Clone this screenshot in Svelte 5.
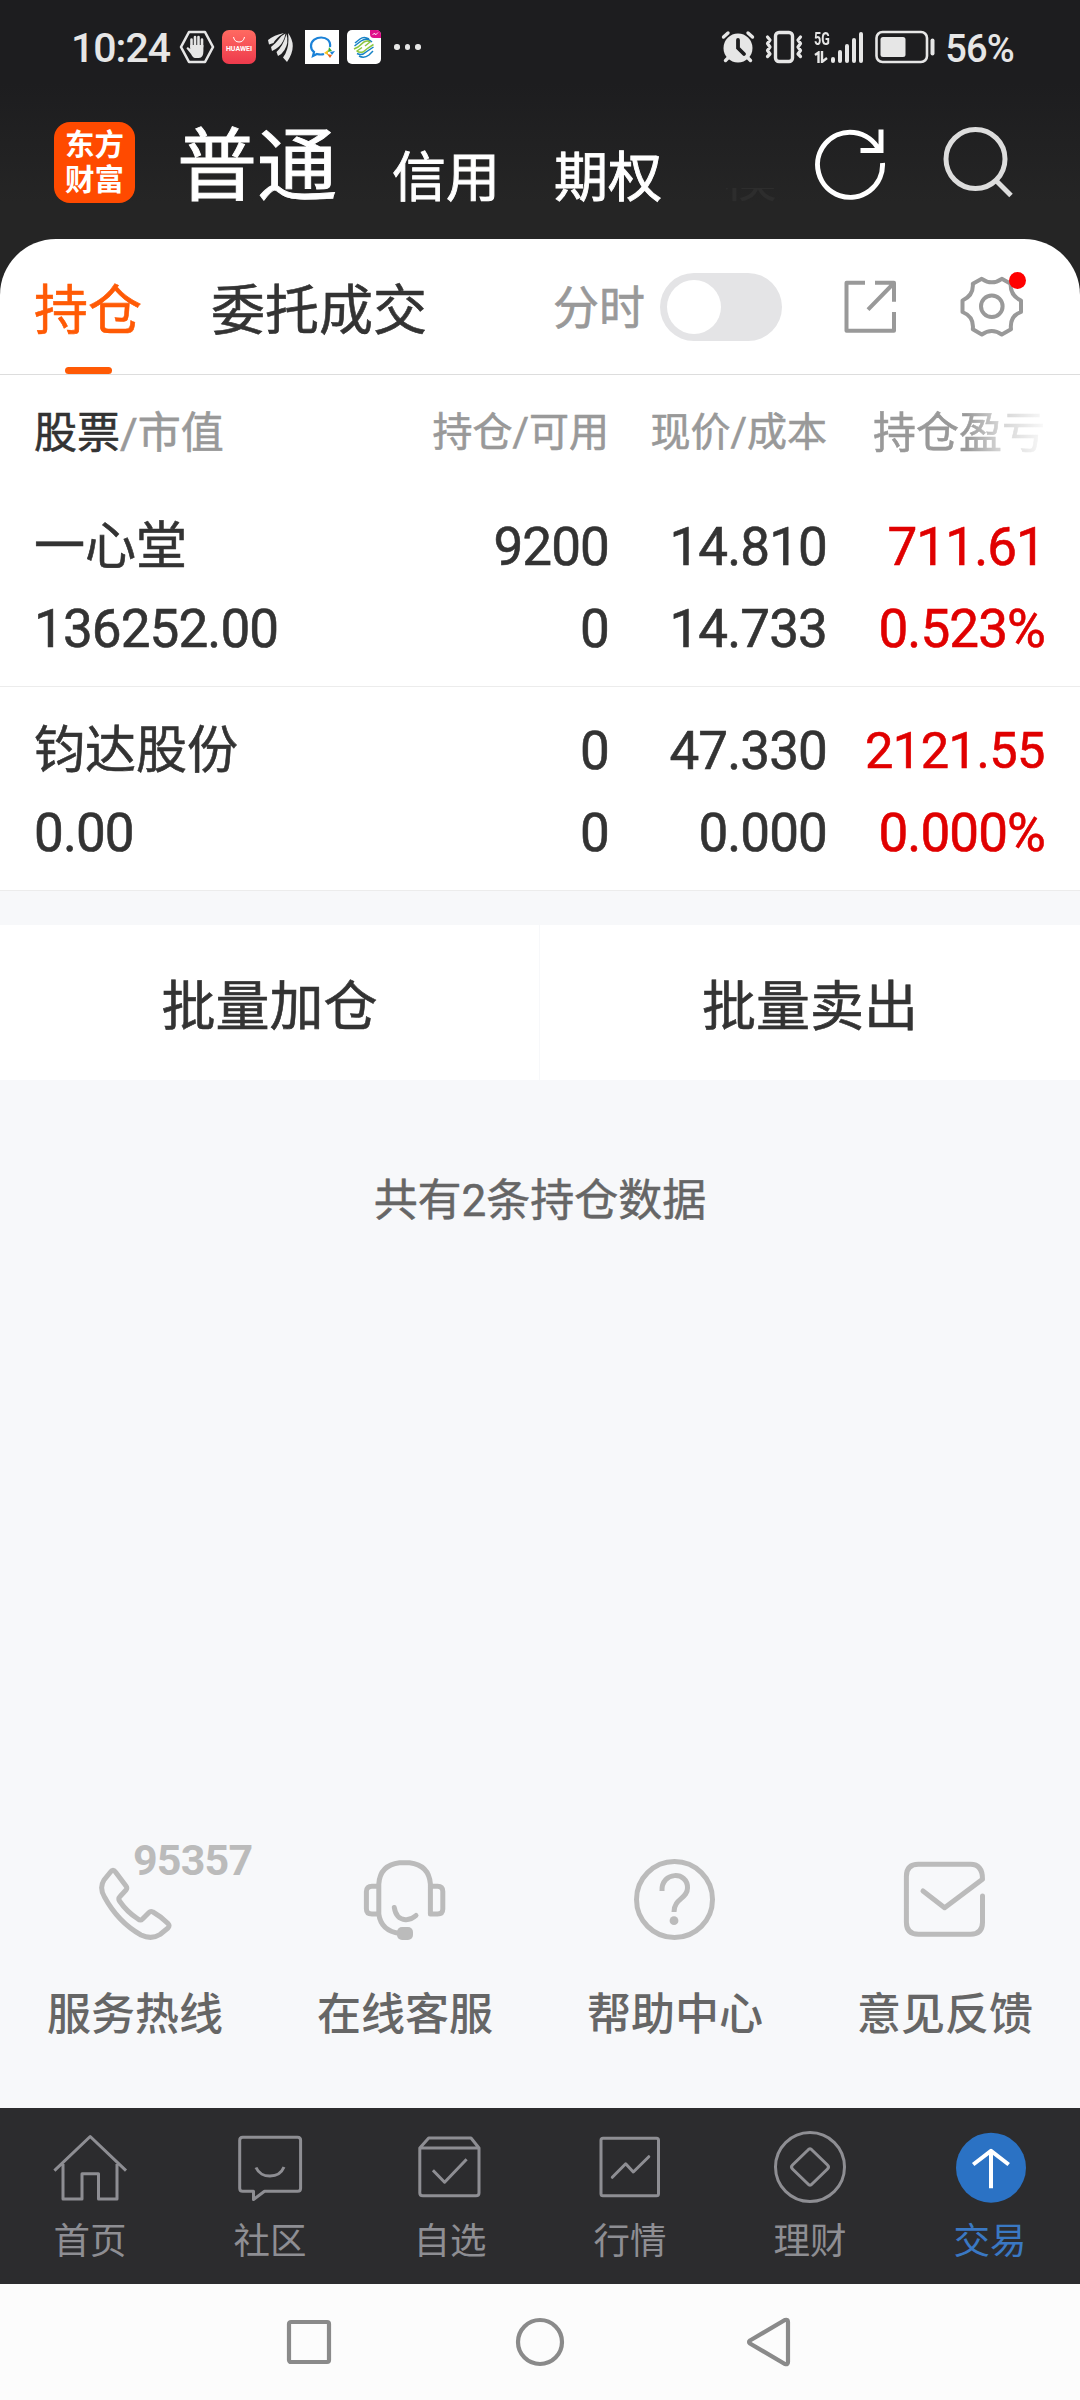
<script lang="ts">
	let intraday = false;
	let activeTab = 'trade';

	const signal = [6, 13, 19, 25, 31];

	const holdings = [
		{
			name: '一心堂',
			value: '136252.00',
			amount: '9200',
			available: '0',
			price: '14.810',
			cost: '14.733',
			profit: '711.61',
			percent: '0.523%'
		},
		{
			name: '钧达股份',
			value: '0.00',
			amount: '0',
			available: '0',
			price: '47.330',
			cost: '0.000',
			profit: '2121.55',
			percent: '0.000%'
		}
	];

	const services = [
		{ id: 'phone', label: '服务热线' },
		{ id: 'online', label: '在线客服' },
		{ id: 'help', label: '帮助中心' },
		{ id: 'feedback', label: '意见反馈' }
	];

	const tabs = [
		{ id: 'home', label: '首页' },
		{ id: 'community', label: '社区' },
		{ id: 'watchlist', label: '自选' },
		{ id: 'market', label: '行情' },
		{ id: 'finance', label: '理财' },
		{ id: 'trade', label: '交易' }
	];
</script>

<div class="screen">
	<header>
		<div class="status">
			<div class="status-left">
				<span class="time">10:24</span>
				<svg class="hand" width="36" height="36" viewBox="0 0 36 36">
					<path d="M10 3H26L34 18L26 33H10L2 18Z" fill="none" stroke="#e6e6e6" stroke-width="2.6" stroke-linejoin="round" />
					<path d="M12.500 18V10.500M16 18V8M19.500 18V8M23 18V10.500" stroke="#e6e6e6" stroke-width="2.600" stroke-linecap="round" />
					<path d="M11.200 16H24.400V22Q24.400 29 20 29H16Q14 29 12 25L7.500 19.500Q8.500 17 11.200 20Z" fill="#e6e6e6" />
				</svg>
				<div class="huawei">
					<svg width="14" height="8" viewBox="0 0 14 8"><path d="M1.500 1Q2.500 6 7 6T12.500 1" fill="none" stroke="#fff" /></svg>
					<span>HUAWEI</span>
				</div>
				<svg class="wing" width="26" height="30" viewBox="0 0 26 30">
					<g fill="#e6e6e6">
						<path d="M1 12.500L0 8Q6 3 16 1Q8 6 5.500 11Z" />
						<path d="M4 19L3 15Q8 11 11 7Q14 3 17.500 1.500Q16 10 11 14.500Q7 18 4 19Z" />
						<path d="M10 24L8.500 20Q15 14 18.500 2Q21 11 16.500 18Q14 22 10 24Z" />
						<path d="M19 30L15 25.500Q22 16 20 1Q30 14 19 30Z" />
					</g>
				</svg>
				<svg class="app" width="34" height="34" viewBox="0 0 34 34">
					<rect width="34" height="34" fill="#fff" />
					<path d="M25 17C27 4 6 5 6 16Q6 20 9 22L8 26L12 24Q16 25 19 24" fill="none" stroke="#1b82d8" stroke-width="2.200" />
					<path d="M24 17L27 21L23 22Z" fill="#3fae2a" />
					<path d="M30 21L27 25L25 22Z" fill="#1b82d8" />
					<path d="M25 28L22 24L27 25Z" fill="#e8641b" />
					<path d="M19 23L23 20L23 25Z" fill="#f7c325" />
				</svg>
				<svg class="app" width="34" height="34" viewBox="0 0 34 34">
					<rect width="34" height="34" rx="5" fill="#fff" />
					<path d="M23 0H29Q34 0 34 5V8H27Q23 8 23 4Z" fill="#e0108a" />
					<path d="M25.500 5L27.500 3L28.500 5L31 2.500" fill="none" stroke="#fff" stroke-width="0.800" />
					<g fill="none" stroke-width="1.500">
						<path d="M8 13L13 9Q17 6 22 9M7.500 16L14 11Q20 7 25 12M12 26Q17 29 22 25L26 21M10 23.500Q15 26 19 22L26.500 17" stroke="#1682c5" />
						<path d="M7 19L11 17L17 12Q21 10 23 12L18 16M26.500 14.500L21 18L16 22Q12 23 10 21L15 17.500" stroke="#8cc63f" />
					</g>
				</svg>
				<span class="dots"><i></i><i></i><i></i></span>
			</div>
			<div class="status-right">
				<svg class="alarm" width="34" height="34" viewBox="0 0 34 34">
					<circle cx="17" cy="18" r="14.500" fill="#e6e6e6" />
					<path d="M2.500 7L7 3M31.500 7L27 3M7 28L4.500 30.500M27 28L29.500 30.500" stroke="#e6e6e6" stroke-width="3.400" stroke-linecap="round" />
					<path d="M17 10V18L23 24" fill="none" stroke="#1d1d1f" stroke-width="3.800" stroke-linecap="round" />
				</svg>
				<svg class="vibrate" width="38" height="34" viewBox="0 0 38 34">
					<rect x="10.500" y="2.500" width="17" height="29" rx="3.500" fill="none" stroke="#e6e6e6" stroke-width="3.400" />
					<path d="M2.500 7L5 10L2.500 13.500L5 17L2.500 20.500L5 24L2.500 26.500M35.500 7L33 10L35.500 13.500L33 17L35.500 20.500L33 24L35.500 26.500" fill="none" stroke="#e6e6e6" stroke-width="3.200" stroke-linejoin="round" stroke-linecap="round" />
				</svg>
				<div class="net">
					<span>5G</span>
					<svg width="16" height="12" viewBox="0 0 16 12">
						<path d="M1 4L4.500 1.500V12M8 0V11L13 7" fill="none" stroke="#e6e6e6" stroke-width="2.400" />
					</svg>
				</div>
				<div class="signal">
					{#each signal as height}
						<i style="height: {height}px"></i>
					{/each}
				</div>
				<svg class="battery" width="60" height="34" viewBox="0 0 60 34">
					<rect x="1.500" y="2" width="50.500" height="30" rx="6" fill="none" stroke="#e6e6e6" stroke-width="2.600" />
					<rect x="5.500" y="7" width="25" height="20" rx="2.500" fill="#e6e6e6" />
					<rect x="55.500" y="8.500" width="4" height="17" rx="2" fill="#e6e6e6" />
				</svg>
				<span class="charge">56%</span>
			</div>
		</div>
		<div class="accounts">
			<div class="logo"><span>东方</span><span>财富</span></div>
			<span class="account current">普通</span>
			<span class="account">信用</span>
			<span class="account">期权</span>
			<span class="account faded">模</span>
			<svg class="refresh" width="76" height="76" viewBox="0 0 76 76" fill="none" stroke="#fff" stroke-width="5">
				<path d="M70.500 39A32.500 32.500 0 1 1 67 26M69 5.500V27M48.500 26.500H71.500" />
			</svg>
			<svg class="search" width="76" height="76" viewBox="0 0 76 76" fill="none" stroke="#ddd" stroke-width="5">
				<circle cx="35.500" cy="34" r="29.500" />
				<path d="M56 55.500L71 70.500" />
			</svg>
		</div>
	</header>

	<main>
		<div class="sheet">
			<nav class="views">
				<span class="view selected">持仓</span>
				<span class="view">委托成交</span>
				<span class="switch-label">分时</span>
				<span class="switch" class:on={intraday}></span>
				<svg class="export" width="56" height="56" viewBox="0 0 56 56" fill="none" stroke="#999" stroke-width="4" stroke-linejoin="round">
					<path d="M22 3.700H3.500V51.700H51V33M32 3.700H51V22.700M50 5L25 30.700" />
				</svg>
				<div class="settings">
					<svg width="64" height="64" viewBox="0 0 64 64" fill="none" stroke="#999" stroke-width="4" stroke-linejoin="round">
						<path d="M21.800 3.800Q31.800 10.800 41.800 3.800L50.700 8.800C50.200 17 53.500 22 61 25.500V37C53 40 50 46 51 54.300L41.800 59.500Q31.800 52.500 21.800 59.500L12.800 54.300C13.800 46 10 40 2.500 37V25.500C10 22 13.500 17 12.800 8.800Z" />
						<circle cx="31.800" cy="31.300" r="10.800" />
					</svg>
					<i class="badge"></i>
				</div>
			</nav>

			<div class="row head">
				<span class="stock"><b>股票</b>/市值</span>
				<span>持仓/可用</span>
				<span>现价/成本</span>
				<span class="fade">持仓盈亏</span>
			</div>

			{#each holdings as item}
				<div class="row holding">
					<span class="name">{item.name}</span>
					<span>{item.amount}</span>
					<span>{item.price}</span>
					<span class="up" class:small={item.profit.length > 6}>{item.profit}</span>
					<span class="value">{item.value}</span>
					<span>{item.available}</span>
					<span>{item.cost}</span>
					<span class="up">{item.percent}</span>
				</div>
			{/each}
		</div>

		<div class="batch">
			<span>批量加仓</span>
			<span>批量卖出</span>
		</div>

		<p class="summary">共有{holdings.length}条持仓数据</p>

		<div class="services">
			{#each services as service}
				<div class="service">
					<svg width="84" height="84" viewBox="0 0 84 84" fill="none" stroke="#bbb" stroke-width="5" stroke-linecap="round" stroke-linejoin="round">
						{#if service.id === 'phone'}
							<path d="M17.500 14Q20 10.500 22.500 14L33 28Q34.500 30 33 32L27 38.500Q25 40.500 26.500 43Q34 54 45 61Q47.500 63 49.500 61L56 54.500Q57.500 53 60 54Q68 58.500 75 65.500Q77 67.500 75 70L67 76.500Q58.500 82 48 77Q25 64 11.500 39Q6 30 11 22Z" />
						{:else if service.id === 'online'}
							<path d="M15.800 57V26Q17 7 36.500 4.700H46.500Q66 7 67.400 26V56H74.500Q79.800 56 79.800 51V33.500Q79.800 28.300 74.500 28.300H67.400M15.800 28.300H9Q3.400 28.300 3.400 33.500V51Q3.400 56 9 56H15.800Q18 73 37 75.500M31.300 49.500Q33 61 42.500 61.700Q48 62 53 57.500" />
							<rect class="mic" x="34" y="69" width="16" height="13" rx="5" />
						{:else if service.id === 'help'}
							<circle cx="41.500" cy="41.500" r="38" />
							<path d="M29 33C28 13 55 13 54.500 30C54.500 41 41 40 41 54" stroke-linecap="butt" />
							<circle class="mic" cx="41" cy="62.700" r="4.400" />
						{:else}
							<path d="M79.500 38V64.300Q79.500 76.300 67.500 76.300H15.400Q3.400 76.300 3.400 64.300V18.300Q3.400 6.300 15.400 6.300H67.500Q79.500 6.300 79.500 21.300L41.600 49.700L20 33" />
						{/if}
					</svg>
					{#if service.id === 'phone'}
						<span class="hotline">95357</span>
					{/if}
					<span class="service-label">{service.label}</span>
				</div>
			{/each}
		</div>
	</main>

	<nav class="tabbar">
		{#each tabs as tab}
			<div class="tab" class:active={tab.id === activeTab}>
				<svg width="80" height="80" viewBox="0 0 80 80" fill="none" stroke="#8e8e93" stroke-width="3" stroke-linejoin="round">
					{#if tab.id === 'home'}
						<path d="M4.400 43.700L40.200 9.500L76 43.700M13 37V72H32V46.700H48.500V72H67V37" />
					{:else if tab.id === 'community'}
						<path d="M12.700 10.300H67.600Q70.600 10.300 70.600 13.300V61.300Q70.600 64.300 67.600 64.300H34.500L23.500 72.500V64.300H12.700Q9.700 64.300 9.700 61.300V13.300Q9.700 10.300 12.700 10.300ZM26 40.500C31 52 49 52 54 40" />
					{:else if tab.id === 'watchlist'}
						<path d="M9.800 21L18.700 11H61L69 21V66Q69 68.700 66 68.700H12.800Q9.800 68.700 9.800 66ZM9.800 21H69M22.900 43.300L34.600 55.200L56.600 32.300" />
					{:else if tab.id === 'market'}
						<rect x="11" y="11.300" width="57.500" height="57.400" rx="2" />
						<path d="M22.300 50.300L35.700 36.800L43.300 45L58.800 29.700" stroke-linecap="round" />
					{:else if tab.id === 'finance'}
						<circle cx="40" cy="40" r="34.500" />
						<path d="M38 23Q40 20.500 42 23L57.500 38Q59.500 40 57.500 42L42 57Q40 59.500 38 57L22.500 42Q20.500 40 22.500 38Z" />
					{:else}
						<circle cx="41" cy="40.700" r="35" fill="#2b72c4" stroke="none" />
						<path d="M41 61.300V24M23.200 37.500L41 23.800L58.700 37.500" stroke="#fff" stroke-width="4" />
					{/if}
				</svg>
				<span>{tab.label}</span>
			</div>
		{/each}
	</nav>

	<div class="system">
		<svg width="52" height="52" viewBox="0 0 52 52"><rect x="6" y="6" width="40" height="40" rx="2" /></svg>
		<svg width="52" height="52" viewBox="0 0 52 52"><circle cx="26" cy="26" r="22" /></svg>
		<svg width="52" height="52" viewBox="0 0 52 52"><path d="M5 24.500L40 4Q43 3 43 6V46Q43 49 40 48L5 27.500Q3 26 5 24.500Z" /></svg>
	</div>
</div>

<style>
	:global(body) {
		margin: 0;
	}
	.screen {
		display: flex;
		flex-direction: column;
		width: 1080px;
		height: 2400px;
		overflow: hidden;
		background-color: #f7f8fa;
		color: #333;
		font-family: Roboto, 'Noto Sans CJK SC', sans-serif;
		white-space: nowrap;
	}
	svg {
		display: block;
		flex: none;
	}

	header {
		height: 239px;
		background: linear-gradient(#1d1d1f 35%, #252525 85%);
		color: #fff;
	}
	.status {
		display: flex;
		justify-content: space-between;
		height: 94px;
		padding: 0 66px 0 71px;
		color: #e6e6e6;
	}
	.status-left,
	.status-right {
		display: flex;
		align-items: center;
	}
	.time {
		width: 108px;
		font-size: 41px;
		font-weight: 500;
		line-height: 50px;
		letter-spacing: -1px;
		padding-top: 2px;
	}
	.huawei {
		display: flex;
		flex-direction: column;
		align-items: center;
		box-sizing: border-box;
		width: 34px;
		height: 34px;
		margin-left: 7px;
		padding-top: 6px;
		border-radius: 7px;
		background: linear-gradient(#ff6a61, #ee3a4c);
	}
	.huawei span {
		font-size: 7px;
		font-weight: 700;
		line-height: 11px;
		color: #fff;
	}
	.wing {
		margin: 0 11px 0 12px;
	}
	.app + .app {
		margin-left: 8px;
	}
	.dots {
		display: flex;
		gap: 5px;
		margin-left: 13px;
	}
	.dots i {
		width: 5.5px;
		height: 5.5px;
		border-radius: 50%;
		background-color: #e6e6e6;
	}
	.vibrate {
		margin: 0 11px 0 10px;
	}
	.net {
		width: 17px;
		height: 32px;
	}
	.net span {
		display: block;
		width: 20px;
		font-size: 18px;
		font-weight: 700;
		line-height: 15px;
		height: 20px;
		transform: scaleX(0.7);
		transform-origin: left;
	}
	.signal {
		display: flex;
		align-items: flex-end;
		gap: 3px;
		margin-right: 12px;
		height: 31px;
	}
	.signal i {
		width: 4px;
		border-radius: 2px;
		background-color: #e6e6e6;
	}
	.charge {
		margin-left: 10px;
		padding-top: 3px;
		font-size: 38px;
		font-weight: 500;
		letter-spacing: -0.8px;
	}

	.accounts {
		display: flex;
		padding: 28px 0 0 54px;
	}
	.logo {
		display: flex;
		flex-direction: column;
		align-items: center;
		box-sizing: border-box;
		width: 81px;
		height: 81px;
		margin-right: 42px;
		padding-top: 6px;
		border-radius: 16px;
		background-color: #ff4a00;
		font-size: 29.5px;
		font-weight: 700;
		line-height: 35px;
	}
	.account {
		height: 82px;
		margin-right: 54px;
		font-size: 54px;
		line-height: 114px;
		-webkit-text-stroke: 0.9px;
	}
	.current {
		font-size: 80px;
		line-height: 90px;
		margin-right: 55px;
	}
	.faded {
		margin: 0 35px 0 7px;
		background: linear-gradient(transparent 66px, #2d2d2d 66px);
		-webkit-background-clip: text;
		background-clip: text;
		color: transparent;
		-webkit-text-stroke: 0;
	}
	.refresh {
		margin: 2px 52px 0 0;
	}
	.search {
		margin-top: 3px;
	}

	main {
		display: flex;
		flex: 1;
		flex-direction: column;
		background: linear-gradient(#252525 60px, #f7f8fa 60px);
	}
	.sheet {
		border-radius: 56px 56px 0 0;
		background-color: #fff;
		-webkit-text-stroke: 0.6px;
	}
	.views {
		position: relative;
		display: flex;
		align-items: center;
		height: 135px;
		padding: 0 56px 0 34px;
		border-bottom: 1px solid #ddd;
	}
	.view {
		position: relative;
		height: 135px;
		margin-right: 69px;
		font-size: 54px;
		line-height: 145px;
	}
	.selected {
		color: #ff5a05;
	}
	.selected::after {
		content: '';
		position: absolute;
		left: 31px;
		bottom: 0;
		width: 47px;
		height: 7px;
		border-radius: 4px;
		background-color: #ff5a05;
	}
	.switch-label {
		margin-left: auto;
		padding-top: 3px;
		font-size: 46px;
		line-height: 60px;
		color: #999;
	}
	.switch {
		display: flex;
		box-sizing: border-box;
		width: 122px;
		height: 68px;
		margin: 0 61px 0 15px;
		padding: 7px;
		border-radius: 34px;
		background-color: #e4e4e6;
	}
	.switch::after {
		content: '';
		width: 54px;
		height: 54px;
		border-radius: 50%;
		background-color: #fff;
	}
	.switch.on {
		justify-content: flex-end;
		background-color: #ff5a05;
	}
	.export {
		margin-right: 61px;
	}
	.settings {
		position: relative;
	}
	.badge {
		position: absolute;
		top: -3px;
		right: -2px;
		width: 17px;
		height: 17px;
		border-radius: 50%;
		background-color: #f00;
	}

	.row {
		display: grid;
		grid-template-columns: 1fr 220px 218px 218px;
		padding: 0 35px 0 34px;
		text-align: right;
	}
	.head {
		height: 108px;
		font-size: 40px;
		line-height: 116px;
		color: #999;
	}
	.stock,
	.fade {
		font-size: 43px;
	}
	.stock {
		text-align: left;
	}
	.stock b {
		font-weight: 400;
		color: #333;
	}
	.fade {
		-webkit-mask-image: linear-gradient(to right, #000 64%, rgba(0, 0, 0, 0.45) 78%, rgba(0, 0, 0, 0.05));
		mask-image: linear-gradient(to right, #000 64%, rgba(0, 0, 0, 0.45) 78%, rgba(0, 0, 0, 0.05));
	}
	.holding {
		grid-auto-rows: 82px;
		box-sizing: border-box;
		height: 204px;
		padding-top: 22px;
		border-bottom: 1px solid #ececec;
		font-size: 53px;
		line-height: 84px;
		letter-spacing: -0.9px;
	}
	.name,
	.value {
		text-align: left;
	}
	.name {
		font-size: 51px;
		letter-spacing: 0;
	}
	.up {
		color: #e00000;
	}
	.small {
		font-size: 50.5px;
		letter-spacing: -0.5px;
	}

	.batch {
		display: grid;
		grid-template-columns: 539px 540px;
		grid-template-rows: 155px;
		gap: 1px;
		height: 155px;
		margin-top: 34px;
		font-size: 54px;
		line-height: 165px;
		text-align: center;
		-webkit-text-stroke: 0.6px;
	}
	.batch span {
		height: 155px;
		background-color: #fff;
	}
	.summary {
		margin: 91px 0 0;
		font-size: 44px;
		line-height: 60px;
		text-align: center;
		color: #666;
		-webkit-text-stroke: 0.5px;
	}

	.services {
		display: grid;
		grid-template-columns: repeat(4, 1fr);
		height: 250px;
		margin-top: auto;
	}
	.service {
		position: relative;
		display: flex;
		flex-direction: column;
		align-items: center;
	}
	.mic {
		fill: #bbb;
		stroke: none;
	}
	.hotline {
		position: absolute;
		top: -18px;
		left: 133px;
		font-size: 43px;
		font-weight: 700;
		line-height: 40px;
		letter-spacing: -0.8px;
		color: #bbb;
	}
	.service-label {
		margin-top: 43px;
		font-size: 44px;
		font-weight: 500;
		line-height: 60px;
		color: #666;
	}

	.tabbar {
		display: grid;
		grid-template-columns: repeat(6, 1fr);
		height: 176px;
		background-color: #2c2c2e;
	}
	.tab {
		display: flex;
		flex-direction: column;
		align-items: center;
		padding-top: 19px;
		font-size: 36.5px;
		line-height: 40px;
		color: #8e8e93;
	}
	.tab span {
		margin-top: 15px;
	}
	.active {
		color: #3a78c3;
	}

	.system {
		display: flex;
		justify-content: center;
		gap: 179px;
		height: 116px;
		align-items: center;
		background-color: #fcfcfc;
	}
	.system svg {
		fill: none;
		stroke: #8a8a8a;
		stroke-width: 4.2;
	}
</style>
